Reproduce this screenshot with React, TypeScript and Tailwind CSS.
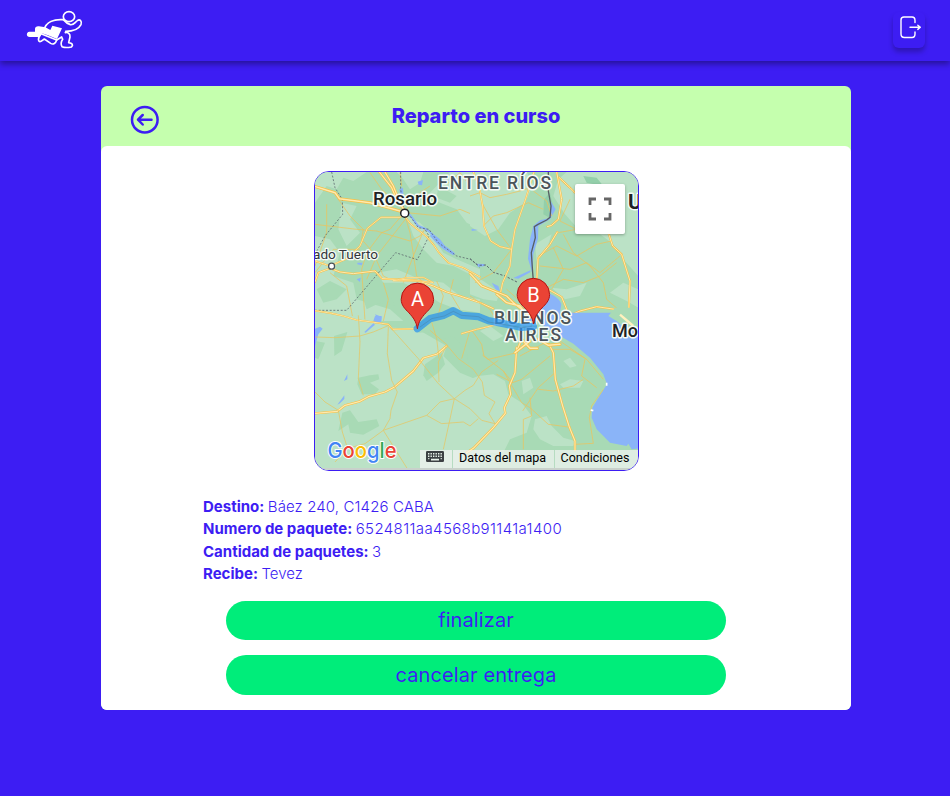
import React from "react";

const major = "M0 57 L75 80 L88 98 L180 110 L270 135 L284 141";

function Road({ d, w = 6 }: { d: string; w?: number }) {
  return (
    <g fill="none" strokeLinejoin="round" strokeLinecap="round">
      <path d={d} stroke="#f6bf45" strokeWidth={w} />
      <path d={d} stroke="#ffe9ad" strokeWidth={w * 0.5} />
    </g>
  );
}

function Pin({ x, y, label }: { x: number; y: number; label: string }) {
  return (
    <g transform={`translate(${x} ${y})`}>
      <path
        d="M0 0 C-1.2 -7.5 -4 -11 -8.5 -16 C-12.5 -20 -16.2 -23.5 -16.2 -29.5 A16.2 16.2 0 0 1 16.2 -29.5 C16.2 -23.5 12.5 -20 8.5 -16 C4 -11 1.2 -7.5 0 0Z"
        fill="#ea4335"
        stroke="#b31412"
        strokeWidth="1"
      />
      <text y="-22.5" textAnchor="middle" fill="#fff" fontSize="20" className="font-['Roboto',sans-serif]">
        {label}
      </text>
    </g>
  );
}

function MapDrawing() {
  return (
    <svg viewBox="315 172 323 298" className="block h-[298px] w-[323px]">
      <rect x="315" y="172" width="323" height="298" fill="#a8dab5" />

      {/* north west */}
      <g transform="translate(310 166) scale(.33333)">
        <g fill="#bbe2c6">
          <path d="M15 18H170L130 45L100 35L80 70L50 60L15 110Z" />
          <path d="M260 18H340L330 50L300 70L280 40Z" />
          <path d="M420 18H510V190L470 170L440 130L390 110L350 90L380 60Z" />
          <path d="M15 210L60 220L90 260L70 330L130 350L140 400L240 430L280 465H15Z" />
          <path d="M200 320L260 310L330 340L400 350L450 390L510 400V440L440 430L390 410L340 380L280 350L220 350Z" />
          <path d="M290 150L330 170L360 200L400 260L440 280L510 310V340L430 300L380 290L340 250L310 210Z" />
          <path d="M95 110L140 120L120 160L150 200L110 240L85 190Z" />
        </g>
        <g fill="#a8dab5">
          <path d="M20 370L60 345L110 370L80 400L40 410Z" />
          <path d="M150 370L190 350L230 380L260 420L210 410L170 430Z" />
          <path d="M385 60L440 90L420 110L380 95Z" />
        </g>
        <g fill="#8ab4f8">
          <path d="M268 70L279 65L282 125L274 110Z" />
          <path d="M142 290L158 290L155 298L142 295ZM140 340L152 335L150 348ZM195 445L215 452L214 465H205Z" />
          <path d="M323 47L339 42L336 58L326 56Z" />
          <path d="M365 200L390 220L405 240L435 262L430 268L400 250L380 232L360 210Z" />
        </g>
        <path d="M290 140C305 145 310 165 325 180C345 188 356 190 365 204L395 236L432 264" fill="none" stroke="#8ab4f8" strokeWidth="6" />
        <g fill="none" stroke="#edc35b" strokeWidth="2.2">
          <path d="M15 175L140 190L200 195L300 225L330 210L345 190M50 115V200L15 300M85 100L120 150L160 190L155 220L190 260L220 330L240 340M270 155L240 190L215 200L170 260L155 310L165 465" />
          <path d="M285 150L300 200L320 330L340 350M290 155L200 270L170 340M340 195L310 270L280 350M360 60L330 80L305 110L285 138M180 20L215 70L280 130M410 55L450 20L510 100M290 140L390 150L450 130L510 155M60 320L110 360L130 465M270 20L275 60M220 350L235 400L220 465M380 345L400 390L380 465M430 340L420 380L450 430M15 320L70 250L150 250" />
        </g>
        <path d="M65 18L75 65L97 100L98 145L45 210L15 265M272 18V70L282 135L300 150L325 185L357 190L385 230L440 270L482 280L510 304M15 433H110L257 260L322 281L357 210L345 190" fill="none" stroke="#59646b" strokeWidth="2.3" strokeDasharray="6 5" />
        <Road d={major} w={9} />
        <Road d="M208 18L245 65L260 100L284 135M225 18L250 60L272 115L285 135" w={7} />
        <Road d="M15 285L60 300L110 278L150 240L172 187L213 154H270L284 143" w={5} />
        <Road d="M284 150L300 172L350 212L370 235L387 260L415 290L460 305L510 333" w={5} />
        <Road d="M15 348L25 320L60 307L90 318L130 323L195 315L216 338L320 343L370 360L410 378L450 390L510 410L550 428" w={6} />
        <Road d="M250 344L290 335L340 334L370 350L330 345Z" w={4} />
      </g>

      {/* north east */}
      <g transform="translate(470 166) scale(.33333)">
        <g fill="#bbe2c6">
          <path d="M0 18H170L190 55L165 110L120 140L85 190L45 210L0 180Z" />
          <path d="M290 18H505V330L460 280L425 230L390 205L330 195L285 145L250 90L265 40Z" />
          <path d="M0 325L40 345L90 380L80 405L40 400L0 385Z" />
          <path d="M195 235L245 205L230 250L200 285ZM245 365L290 370L350 350L330 390L285 400Z" />
          <path d="M420 380L460 350L505 370V425L470 405Z" />
        </g>
        <g fill="#93cfaa">
          <path d="M222 100L240 80L250 125L238 155L220 145ZM340 30L380 35L400 60L350 50Z" />
        </g>
        <g fill="#8ab4f8">
          <path d="M242 105L257 130L240 160L205 180L204 218L190 265L187 322L174 278L180 220L190 180L210 163L238 156Z" />
          <path d="M5 188L24 192L5 195ZM20 293L43 294L45 300L24 303ZM130 336L181 313L181 319L145 338ZM65 350L85 360L90 376L77 370Z" />
          <path d="M208 377C240 380 267 391 274 415L270 440L300 451L330 445L400 447L435 465H150L180 440Z" />
        </g>
        <g fill="none" stroke="#edc35b" strokeWidth="2.2">
          <path d="M0 90L30 80L60 95L110 85L150 75L210 55M40 180L70 150L110 140L175 110L220 130M125 250L80 190L35 110M15 350L70 320L125 250M190 75L230 105L245 150" />
          <path d="M265 200L320 190L385 165L420 200M205 270L260 240L320 270L380 235L425 225M210 300L300 310L350 290L390 320L450 270M230 365L280 340L340 350L390 330L440 290M280 205L310 260L360 300L400 350L410 400L450 435M250 245L280 310L245 370M300 100L270 165L320 190M340 60L310 80M110 370L155 410L195 440M0 390L60 430L80 465" />
        </g>
        <path d="M0 278L24 298L48 297L70 319L105 330L145 350" fill="none" stroke="#59646b" strokeWidth="3" strokeDasharray="7 5" />
        <Road d="M10 18L28 65L38 120L42 180L62 225L90 242L125 250M192 18L165 105L135 190L125 250L120 300L98 350L92 378" w={5} />
        <Road d="M260 18L265 45L275 100L265 160L245 178L232 182M268 35L300 65L315 80M262 198L240 235L204 278L200 350M415 200L428 240L455 265L480 345L475 465" w={6} />
        <Road d="M0 322L35 360L80 378L110 390L130 410L180 450M80 385L110 410L150 420L178 455" w={8} />
        <Road d="M235 370L275 393L290 430L275 455M272 460L330 435L380 422L435 430L475 440" w={6} />
        <path d="M235 18V75L243 120L240 154L230 162L204 175L193 182L196 215L184 260L188 320L193 380" fill="none" stroke="#575f65" strokeWidth="4" />
      </g>

      {/* south west */}
      <g transform="translate(310 316) scale(.33333)">
        <path d="M15 10L130 0L250 35L320 38L410 90L400 120L450 170L510 195V465H15Z" fill="#bbe2c6" />
        <g fill="#a8dab5">
          <path d="M15 75L45 80L25 130L15 125ZM72 60L112 48L95 105L73 120Z" />
          <path d="M145 185L180 178L205 175L208 190L180 200L207 220L195 235L155 235L142 205Z" />
          <path d="M97 290L120 283L145 318L200 310L208 330L160 356L120 350L115 325L85 345Z" />
          <path d="M325 50L355 48L400 70L430 60L470 105L475 145L510 200V0H355Z" />
          <path d="M345 145L395 110L405 145L385 170L350 195L340 178Z" />
        </g>
        <g fill="#8ab4f8">
          <path d="M15 38L30 32L38 38L25 55L15 90ZM195 0H215L212 25L190 15ZM163 48L190 22L195 26L167 50ZM102 195L112 175L112 190ZM82 266L103 238V249L90 262Z" />
        </g>
        <Road d="M15 292L82 286L105 268L150 256L175 242L225 228L255 212L310 165L340 126L382 114L410 90" w={7} />
        <Road d="M15 -16L65 -8L100 0L140 12L215 22L235 25L248 40L320 38" w={5} />
      </g>

      {/* south east and the river mouth */}
      <g transform="translate(470 316) scale(.33333)">
        <g fill="#bbe2c6">
          <path d="M0 190L25 180L70 175L105 195L115 235L155 260L185 300L170 350L120 370L100 410H0Z" />
          <path d="M155 195L180 185L190 215L160 235ZM195 310L230 300L245 330L280 365L315 375L310 390L250 390L210 370L190 340Z" />
          <path d="M270 205L300 190L340 195L330 215L280 215ZM280 135L300 125L320 150L300 155ZM60 30L100 60L70 75L30 45Z" />
        </g>
        <path d="M175 -10L230 38L270 60L310 83L360 125L400 175L411 205L385 245L367 275L365 305L380 340L420 380L470 390L475 383L485 400L525 395V-10Z" fill="#8ab4f8" />
        <path d="M415 0L440 15L460 33L525 45V-25L435 -25Z" fill="#a8dab5" />
        <g fill="none" stroke="#edc35b" strokeWidth="2.2">
          <path d="M5 42L35 85L42 120L100 165L128 200L155 190L240 120M140 110L55 130L38 118M100 165L155 260L180 275L235 325L295 333M128 200L80 175M180 245L185 300L160 310V400" />
          <path d="M205 220L250 225L310 210L340 190M255 170L205 215L158 285M270 75L350 130L400 190M245 100L300 100L350 130M235 75L150 120M315 385L370 382L358 305L365 270L400 220M345 130L335 180L380 215" />
        </g>
        <Road d="M140 95L135 170L118 210L122 235L103 275L106 292L70 335L10 397L-12 412M155 70L140 105M237 85L250 110L256 190L278 270L298 333L315 375V403" w={7} />
        <Road d="M155 70L180 97H202M135 110L180 75M205 70L235 88L270 85" w={9} />
        <path d="M450 -4L490 30" stroke="#fff0bd" strokeWidth="7" />
        <path d="M362 282L370 284M410 200V209" stroke="#fff" strokeWidth="5" />
      </g>

      {/* secondary roads of the southern plain */}
      <g transform="translate(315 172) scale(.33333)" fill="none" stroke="#e6c562" strokeWidth="2.2" strokeLinejoin="round">
        <path d="M0 495L60 497L135 492L175 480L222 460M70 715L30 690L0 660M70 715L82 780L98 830L60 870M130 430L135 510L130 620L145 670" />
        <path d="M220 465L217 545L230 625L247 660L228 715L225 740L205 775L280 895M225 465L310 560L370 635L418 680L465 710L500 745L540 755" />
        <path d="M418 680L375 690L335 730L205 775L150 815L95 830M335 730L380 755L445 750L465 762L490 740M418 680L402 755L385 832M418 680L450 655L475 640L500 600L550 565" />
        <path d="M395 520L370 570L372 630M398 522L430 560L475 592L502 630L508 670L540 690L522 725L540 755M345 475L398 520M350 450L365 500L372 560M465 475L440 560" />
      </g>
      <g transform="translate(315 172) scale(.33333)">
        <Road d="M440 485L485 472L540 459" w={5} />
      </g>

      <g className="font-['Roboto',sans-serif]" paintOrder="stroke" stroke="#f5fbf6" strokeLinejoin="round">
        <g fill="#4b545a" strokeWidth="3" fontWeight="500" fontSize="17.5">
          <text x="438" y="189" textLength="113">ENTRE RÍOS</text>
          <text x="494" y="324" textLength="77">BUENOS</text>
          <text x="505" y="341" textLength="56">AIRES</text>
        </g>
        <g fill="#202124" strokeWidth="3" fontWeight="500">
          <text x="373" y="204.5" fontSize="18" textLength="64" lengthAdjust="spacingAndGlyphs">Rosario</text>
          <text x="612" y="337" fontSize="18">Mo</text>
          <text x="628" y="209" fontSize="21" fontWeight="700">U</text>
        </g>
        <text x="313" y="259" fontSize="13.5" fill="#303539" strokeWidth="2.5" textLength="65" lengthAdjust="spacingAndGlyphs">ado Tuerto</text>
      </g>
      <circle cx="404.7" cy="213.2" r="4" fill="#fff" stroke="#202124" strokeWidth="1.5" />
      <circle cx="331.6" cy="266.2" r="3" fill="#fff" stroke="#4b545a" strokeWidth="1.3" />

      {/* delivery route */}
      <g transform="translate(315 172) scale(.33333)" fill="none" strokeLinejoin="round" strokeLinecap="round">
        <path d="M307 470L345 440L385 430L415 416L440 430L490 434L520 446L580 458L620 466L655 463" stroke="#2792ee" strokeOpacity=".72" strokeWidth="22" />
        <path d="M315 465L350 440L388 432L415 418L440 430L490 434L520 450L580 460L620 467L650 463" stroke="#4c83a8" strokeOpacity=".5" strokeWidth="3" />
      </g>

      <Pin x={417.4} y={328.8} label="A" />
      <Pin x={533.4} y={324} label="B" />

      <text x="327.5" y="458" fontSize="21.5" fontWeight="500" textLength="69" lengthAdjust="spacingAndGlyphs" paintOrder="stroke" stroke="#fff" strokeWidth="2" strokeLinejoin="round" className="font-['Inter',sans-serif]">
        <tspan fill="#4285f4">G</tspan>
        <tspan fill="#ea4335">o</tspan>
        <tspan fill="#fbbc04">o</tspan>
        <tspan fill="#4285f4">g</tspan>
        <tspan fill="#34a853">l</tspan>
        <tspan fill="#ea4335">e</tspan>
      </text>
    </svg>
  );
}

function Keyboard() {
  return (
    <svg viewBox="0 0 18 11" className="h-[11px] w-[18px]">
      <rect width="18" height="11" rx="1.3" fill="#3c4043" />
      <path d="M2 2.7H16M2 5.3H16" stroke="#e8f1ea" strokeWidth="1.4" strokeDasharray="1.4 1.1" />
      <path d="M5 8.7H13" stroke="#e8f1ea" strokeWidth="1.7" />
      <path d="M2 7.7H3.4M14.6 7.7H16" stroke="#e8f1ea" strokeWidth="1" />
    </svg>
  );
}

function CourierLogo() {
  return (
    <svg viewBox="30 24 180 126" className="h-[42px] w-[60px]">
      <g fill="none" stroke="#fff" strokeWidth="5" strokeLinejoin="round" strokeLinecap="round">
        <ellipse cx="162" cy="50" rx="17" ry="15" />
        <path d="M145 59C118 57 92 65 87 91L77 103C68 113 68 128 78 124L88 117L107 130C115 135 122 130 125 120L140 111L143 118C137 127 138 135 141 140C150 144 159 143 169 141C176 135 172 129 161 128L165 111C166 101 159 96 151 98" />
        <path d="M145 59C151 66 158 72 166 74C176 76 180 67 187 62C195 56 202 65 198 74C191 88 172 94 152 94" />
        <path d="M78 101L95 108L125 120" />
      </g>
      <path d="M112 77L141 85L126 117L99 106L78 99L75 111H44C33 111 33 96 43 95H60V87C60 80 66 78 72 79L91 82L106 90Z" fill="#fff" />
    </svg>
  );
}

const details = [
  ["Destino:", "Báez 240, C1426 CABA", "tracking-[0.12px]"],
  ["Numero de paquete:", "6524811aa4568b91141a1400", "tracking-[0.4px]"],
  ["Cantidad de paquetes:", "3", "tracking-normal"],
  ["Recibe:", "Tevez", "tracking-normal"],
];

export default function App() {
  return (
    <div className="min-h-screen bg-[#3d1df3] font-['Inter',sans-serif] text-[#3d1df3]">
      <header className="flex h-[61px] items-start justify-between pl-[25px] pr-[25px] shadow-[0_3px_6px_rgba(0,0,0,0.38)]">
        <div className="pt-2">
          <CourierLogo />
        </div>
        <button className="mt-3 flex h-9 w-8 justify-center rounded-md pt-1 shadow-[0_4px_5px_rgba(0,0,0,0.25)]" aria-label="Salir">
          <svg viewBox="0 0 22 24" className="ml-1 h-6 w-[22px] shrink-0" fill="none" stroke="#fff" strokeWidth="1.4" strokeLinecap="round" strokeLinejoin="round">
            <path d="M15 6.5V4.5C15 2 13.7 1 12 1H4C2 1 1 2 1 4V18C1 20.5 2.5 21.5 4.5 21.5H12C14 21.5 15 20.2 15 18V16" />
            <path d="M10 11.3H20M17.8 9.2L20.3 11.3L17.8 13.4" />
          </svg>
        </button>
      </header>

      <main className="mx-auto mt-[25px] ml-[101px] h-[624px] w-[750px] overflow-hidden rounded-md bg-[#c5ffae]">
        <div className="grid h-[60px] grid-cols-[58px_1fr_58px] items-center">
          <button className="mt-2 ml-[29px]" aria-label="Volver">
            <svg viewBox="0 0 30 30" className="h-[30px] w-[30px]" fill="none" stroke="#3d1df3" strokeWidth="2.5" strokeLinecap="round" strokeLinejoin="round">
              <circle cx="14.8" cy="14.7" r="12.8" />
              <path d="M21.5 14.7H8M12.7 10L8 14.7L12.7 19.5" />
            </svg>
          </button>
          <h1 className="text-center text-xl font-extrabold">Reparto en curso</h1>
        </div>
        <section className="flex h-[564px] flex-col items-center rounded-t-md bg-white pt-[25px]">
          <div className="relative h-[300px] w-[325px] shrink-0 overflow-hidden rounded-[15px] border border-[#3d1df3]">
            <MapDrawing />
            <button className="absolute right-[13px] top-3 flex h-[50px] w-[50px] items-center justify-center rounded-xs bg-white shadow-[0_1px_3px_rgba(0,0,0,0.3)]" aria-label="Pantalla completa">
              <svg viewBox="0 0 24 24" className="h-6 w-6" fill="none" stroke="#666" strokeWidth="2.8">
                <path d="M2 8V2H8M16 2H22V8M22 16V22H16M8 22H2V16" />
              </svg>
            </button>
            <div className="absolute right-0 bottom-0 left-0 h-0.5 bg-[#c9d1cb]" />
            <div className="absolute right-0 bottom-0.5 flex h-[18px] w-[218px] items-center bg-[#f5f5f5]/70 font-['Roboto',sans-serif] text-[12.5px] whitespace-nowrap text-black">
              <div className="flex h-full w-[33px] shrink-0 items-center justify-center border-r border-[#b6dcc1] pr-0.5 pb-[5px]">
                <Keyboard />
              </div>
              <span className="h-full w-[102px] border-r border-[#b6dcc1] pr-px text-center leading-[15px]">Datos del mapa</span>
              <span className="h-full pl-1.5 leading-[15px]">Condiciones</span>
            </div>
          </div>
          <dl className="mt-[25px] h-[90px] w-[546px] text-[15px] leading-[22.4px]">
            {details.map(([label, value, tracking]) => (
              <div key={label} className="flex gap-[3.5px]">
                <dt className="font-bold">{label}</dt>
                <dd className={"font-[350] " + tracking}>{value}</dd>
              </div>
            ))}
          </dl>
          <div className="mt-[15px] flex w-[500px] flex-col gap-[15px] text-xl font-normal tracking-[0.1px]">
            <button className="h-[39px] rounded-[20px] bg-[#00ed7a] pb-0.5">finalizar</button>
            <button className="h-10 rounded-[20px] bg-[#00ed7a]">cancelar entrega</button>
          </div>
        </section>
      </main>
    </div>
  );
}
